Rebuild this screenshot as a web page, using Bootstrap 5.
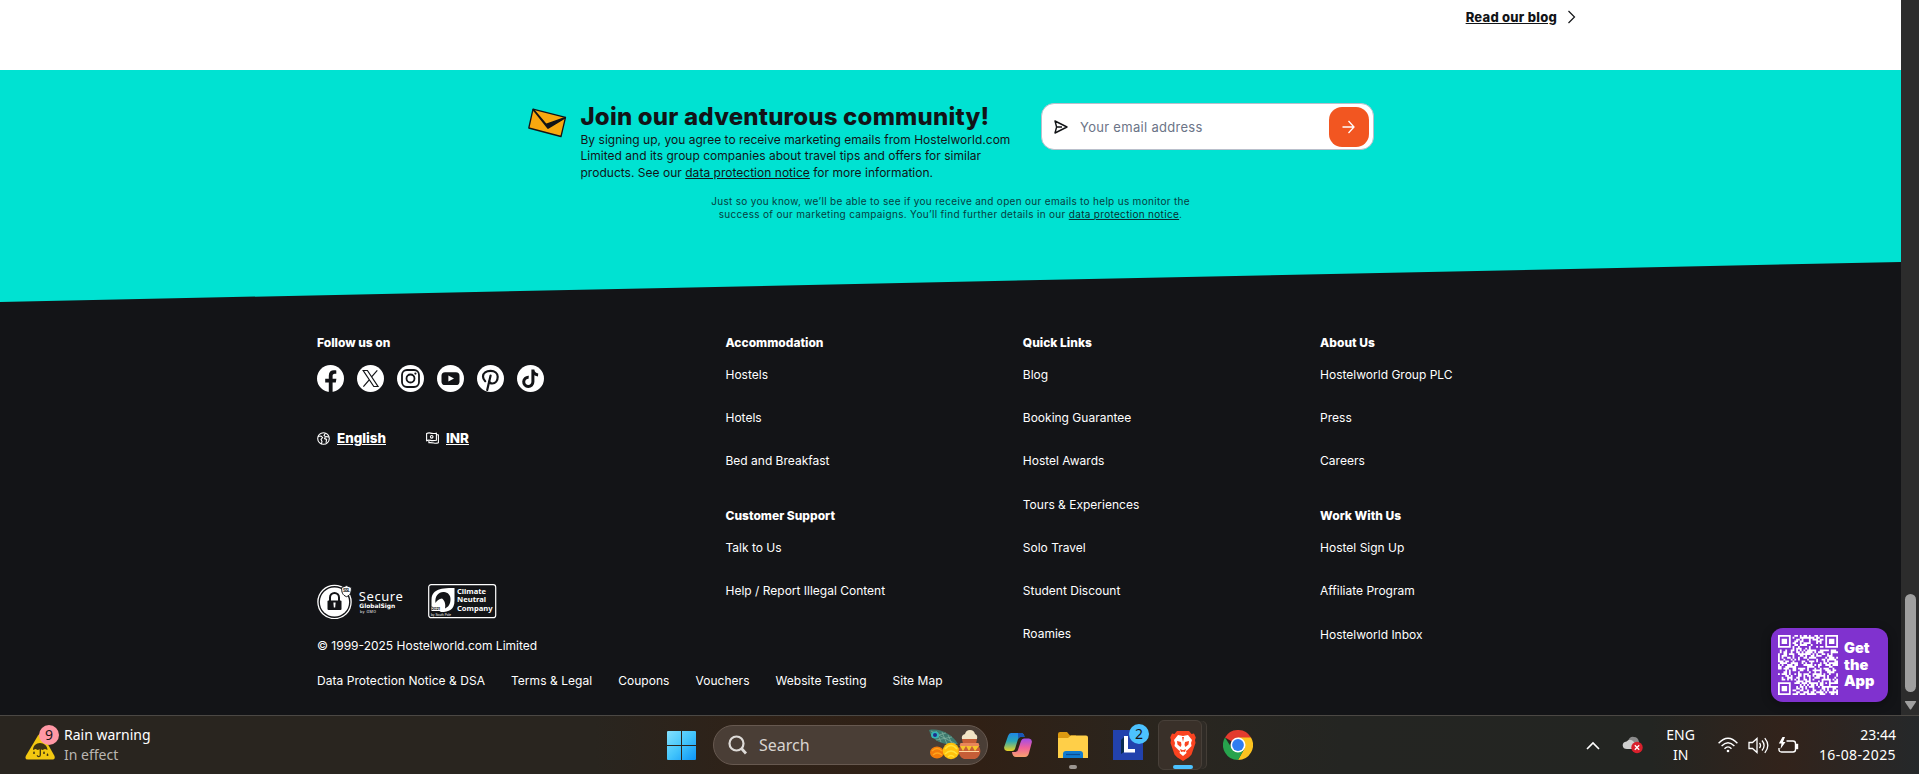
<!DOCTYPE html>
<html lang="en">
<head>
<meta charset="utf-8">
<meta name="viewport" content="width=device-width, initial-scale=1">
<title>Hostelworld</title>
<link href="https://cdn.jsdelivr.net/npm/bootstrap@5.3.0/dist/css/bootstrap.min.css" rel="stylesheet">
<style>
  body { height: 774px; overflow: hidden; font-family: Inter, sans-serif; color: #121417; background: #131417; }
  svg { display: block; flex: none; }
  .screen { height: 715px; }
  .blog-strip { height: 70px; padding: 6px 324px 0 0; }
  .blog-link { font-size: 13px; font-weight: 800; line-height: 22px; letter-spacing: .25px; color: #121417; }
  .community { height: 232px; background: #00e2d2; }
  .community-body { height: 192px; width: 848px; padding-top: 33px; }
  .mail-icon { margin: 5px 0 0 1px; }
  .join-block { width: 460px; margin-left: 13px; }
  .join-title { font-size: 24px; font-weight: 800; line-height: 28px; letter-spacing: .2px; padding-bottom: 1px; }
  .join-copy { font-size: 12px; line-height: 16.4px; letter-spacing: .02px; }
  .join-note { font-size: 10px; line-height: 13px; letter-spacing: .31px; color: #07403f; margin-top: 14px; }
  .join-note a { color: #083033; }
  .email-box { width: 333px; height: 47px; border: 1px solid #b9bfcb; border-radius: 13px; padding: 0 4px 0 12px; }
  .email-box input { font-size: 13px; letter-spacing: .3px; padding: 2px 0 0; margin-left: 12.5px; }
  .email-box input::placeholder { color: #6b7487; opacity: 1; }
  .go-btn { width: 40px; height: 40px; border-radius: 13px; background: #f25621; }
  .site-footer { width: 1267px; padding-top: 31px; color: #fff; }
  .footer-top { height: 323px; }
  .brand-col { width: 408.5px; flex: none; }
  .link-col { width: 297.3px; flex: none; }
  .foot-head { font-size: 12px; font-weight: 800; line-height: 20px; margin: 0 0 12px; }
  .link-col li { height: 43.2px; font-size: 12px; line-height: 20px; }
  .link-col ul { margin: 0 0 11.6px; }
  .foot-text { font-size: 12px; line-height: 20px; }
  .socials { gap: 13px; }
  .prefs { gap: 40px; margin-top: 36px; }
  .pref { font-size: 13.4px; font-weight: 800; line-height: 20px; gap: 7px; }
  .seals { margin-top: auto; gap: 21px; }
  .copyright { margin-top: 17px; }
  .legal { gap: 26px; margin-top: 15px; letter-spacing: .04px; }
  .scroll-track { width: 18px; background: #2c2c2c; padding-bottom: 4px; }
  .scroll-thumb { width: 11px; height: 98px; border-radius: 6px; background: #9f9f9f; margin-bottom: 8px; }
  .app-badge { position: absolute; left: 1771px; top: 628px; width: 117px; height: 74px; border-radius: 12px; background: #8032cf; padding-left: 7px; gap: 6px; box-shadow: 0 2px 10px rgba(0,0,0,.35); }
  .app-text { font-size: 14.6px; font-weight: 900; line-height: 16.7px; color: #fff; }
  .taskbar { height: 59px; display: grid; grid-template-columns: 667px 1fr auto; border-top: 1px solid #4b4844; color: #fff; font-family: "Noto Sans", sans-serif; font-size: 14px; line-height: 20px;
    background: linear-gradient(90deg, #29251f 0, #29251f 31%, #2f2218 39%, #302015 51%, #292620 62%, #242522 70%, #232522 86%, #32231b 93%, #25282a 100%); }
  .weather { padding-left: 25px; gap: 8px; }
  .sub { color: #b9b6b2; }
  .count-dot { position: absolute; width: 20px; height: 20px; border-radius: 50%; text-align: center; line-height: 20px; color: #1a1517; }
  .dot-pink { left: 14px; top: -2px; background: #ff98a5; }
  .dot-blue { left: 16px; top: -6px; background: #4cc2ff; }
  .search-pill { width: 275px; height: 40px; border: 1px solid #675950; border-radius: 20px; background: #4a3e36; margin-left: 17px; padding: 0 6px 0 14px; font-size: 16px; color: #d8d4d0; }
  .search-pill span { margin-left: 12px; }
  .brave-tile { width: 44px; height: 50px; border: 1px solid #484039; border-radius: 6px; background: #393029; margin-left: 15px; padding-left: 6px; box-shadow: 5px 0 0 -1px #2f2b26, 6px 0 0 -1px #433d36; }
  .run-mark { position: absolute; left: 50%; transform: translateX(-50%); height: 4px; border-radius: 2px; }
  .mark-idle { width: 8px; top: 33px; background: #9c9690; }
  .mark-active { width: 20px; top: 44px; margin-left: 3px; background: #4cc2ff; }
  .tray { padding-right: 23px; white-space: nowrap; }
  .tray-date { letter-spacing: .4px; }
</style>
<script src="https://cdn.jsdelivr.net/npm/bootstrap@5.3.0/dist/js/bootstrap.bundle.min.js"></script>
</head>
<body>
<div class="screen d-flex">
  <div class="flex-grow-1">
    <div class="blog-strip bg-white d-flex justify-content-end align-items-start">
      <a class="blog-link" href="#">Read our blog</a>
      <svg class="ms-2 mt-1" width="12" height="14" viewBox="0 0 12 14" fill="none" stroke="#121417" stroke-width="1.2"><path d="M3.500 1 9.500 7l-6 6"/></svg>
    </div>
    <section class="community">
      <div class="community-body mx-auto">
        <div class="d-flex align-items-start">
          <svg class="mail-icon" width="40" height="30" viewBox="0 0 40 30"><path d="M5 1.2 37.5 9.4 33 28.5.8 20Z" fill="#f8a80f" stroke="#121417" stroke-width="1.3" stroke-linejoin="round"/><path d="M5.5 1.8 18 16.500 37 9.8 20 20Z" fill="#121417" stroke="#121417" stroke-width="1.8" stroke-linejoin="round"/></svg>
          <div class="join-block">
            <h2 class="join-title m-0">Join our adventurous community!</h2>
            <div class="join-copy text-nowrap">By signing up, you agree to receive marketing emails from Hostelworld.com<br>Limited and its group companies about travel tips and offers for similar<br>products. See our <a class="text-reset" href="#">data protection notice</a> for more information.</div>
          </div>
          <div class="email-box bg-white d-flex align-items-center">
            <svg width="14" height="14" viewBox="0 0 14 14" fill="none" stroke="#121417" stroke-width="1.4" stroke-linejoin="round"><path d="M1 1 13 7 1 13 2.6 7ZM2.6 7H8"/></svg>
            <input class="form-control border-0 shadow-none" placeholder="Your email address">
            <button class="go-btn btn border-0 p-0 d-flex align-items-center justify-content-center flex-shrink-0" aria-label="Subscribe"><svg width="13" height="14" viewBox="0 0 13 14" fill="none" stroke="#fff" stroke-width="1.3"><path d="M.5 7h11.5M6.5 1 12 7l-5.500 6"/></svg></button>
          </div>
        </div>
        <p class="join-note text-center mb-0">Just so you know, we’ll be able to see if you receive and open our emails to help us monitor the<br>success of our marketing campaigns. You’ll find further details in our <a href="#">data protection notice</a>.</p>
      </div>
      <svg width="100%" height="40" viewBox="0 0 100 40" preserveAspectRatio="none"><path d="M0 40 100 0V40Z" fill="#131417"/></svg>
    </section>
    <footer class="site-footer mx-auto">
      <div class="footer-top d-flex">
        <div class="brand-col d-flex flex-column">
          <h6 class="foot-head">Follow us on</h6>
          <div class="socials d-flex">
            <svg width="27" height="27" viewBox="0 0 27 27"><circle cx="13.5" cy="13.5" r="13.5" fill="#fff"/><path d="M11.8 27V17.4H8.2V13.8h3.6v-3.1c0-3.6 2-5.4 5.2-5.4 1.2 0 2.3.2 2.3.2v3.2h-1.5c-1.7 0-2.2 1-2.2 2.1v3h3.8l-.6 3.6h-3.2V27Z" fill="#131417"/></svg>
            <svg width="27" height="27" viewBox="0 0 27 27"><circle cx="13.5" cy="13.5" r="13.5" fill="#fff"/><g fill="none" stroke="#131417" stroke-width="1.2"><path d="M6.2 5.5h4.2L21 21.5h-4.2ZM20.3 5.3 14.6 11.8M12.2 14.8 6.4 21.6"/></g></svg>
            <svg width="27" height="27" viewBox="0 0 27 27"><circle cx="13.5" cy="13.5" r="13.5" fill="#fff"/><g fill="none" stroke="#131417" stroke-width="1.8"><rect x="5" y="5" width="17" height="17" rx="5"/><circle cx="13.5" cy="13.5" r="4"/></g><circle cx="18.4" cy="8.6" r="1.1" fill="#131417"/></svg>
            <svg width="27" height="27" viewBox="0 0 27 27"><circle cx="13.5" cy="13.5" r="13.5" fill="#fff"/><rect x="4.500" y="7.2" width="18" height="12.8" rx="3.6" fill="#131417"/><path d="m11.4 10.6 5.600 3-5.600 3Z" fill="#fff"/></svg>
            <svg width="27" height="27" viewBox="0 0 27 27"><circle cx="13.5" cy="13.5" r="13.5" fill="#fff"/><g fill="none" stroke="#131417" stroke-width="2.2" stroke-linecap="round"><path d="M8.2 16.2C6.9 15 6 13.6 6 11.6 6 8 9.3 5.9 13.6 5.9c4.2 0 7.1 2.4 7.1 5.900 0 3.8-2.3 6.7-5.4 6.7-1.8 0-2.8-.9-3.1-1.9"/><path d="M13.6 10.6 10.2 25"/></g></svg>
            <svg width="27" height="27" viewBox="0 0 27 27"><circle cx="13.5" cy="13.5" r="13.5" fill="#fff"/><path d="M15.9 4.5V16.8a4.6 4.6 0 1 1-4.2-4.5M15.900 5c.4 3 2.3 4.6 5.2 4.9" fill="none" stroke="#131417" stroke-width="3"/></svg>
          </div>
          <div class="prefs d-flex">
            <div class="pref d-flex align-items-center"><svg width="13" height="13" viewBox="0 0 13 13" fill="none" stroke="#fff" stroke-width="1.1"><circle cx="6.5" cy="6.5" r="5.8"/><path d="M1 4.500 4 4l1.600 1.600L4 7.400l1 2-.6 2.600M8.500 1.200 7 3.400l1.400 1.200L7.600 6.600l2 .8L9 10.800M9 4.600l3 .4"/></svg><a class="text-reset" href="#">English</a></div>
            <div class="pref d-flex align-items-center"><svg width="13" height="12" viewBox="0 0 13 12" fill="none" stroke="#fff" stroke-width="1.1"><path d="M.6 1.500q2-1 4-.4t5.800.1v7q-3.500.8-5.800.2t-4 .3ZM10.400 2.500l2 .4v7.800q-2 .8-4.500.3t-5-.3V9"/><circle cx="5.700" cy="4.800" r="1.300"/></svg><a class="text-reset" href="#">INR</a></div>
          </div>
          <div class="seals d-flex align-items-center">
            <svg width="90" height="36" viewBox="0 0 90 36" fill="#fff"><circle cx="17.500" cy="19" r="16.600" fill="none" stroke="#fff" stroke-width="1.300"/><circle cx="17.500" cy="19" r="14.600"/><rect x="10.500" y="17.500" width="14" height="9.500" rx="1" fill="#131417"/><path d="M13 18v-3.500a4.500 4.500 0 0 1 9 0V18" fill="none" stroke="#131417" stroke-width="2"/><path d="M16.400 19.500h2.200l-.4 5h-1.400Z"/><path d="M24.600 4.500 29.500 2.600l4.900 1.900c0 4.800-.8 7.600-4.900 9.200-4.100-1.600-4.900-4.400-4.900-9.200Z" stroke="#131417"/><text x="26" y="9.200" font-size="4.500" font-weight="700" textLength="7" fill="#131417">SSL</text><text x="41.800" y="18" font-size="13" textLength="44" font-family="Noto Sans">Secure</text><text x="42.300" y="25.400" font-size="6" font-weight="700" textLength="36" lengthAdjust="spacingAndGlyphs" font-family="DejaVu Sans">GlobalSign</text><text x="43" y="30.400" font-size="3.600" textLength="16">by GMO</text></svg>
            <svg width="69" height="35" viewBox="0 0 69 35" fill="#fff"><rect x=".7" y=".7" width="67" height="33" rx="2.500" fill="none" stroke="#fff" stroke-width="1.200"/><path d="M3.500 16C3.500 8 8 3.500 26.500 4v12.500C26.500 26 21 28 13 28L3.500 22Z"/><path d="M7.500 19c-1-7 3.500-11.500 8.500-11 4 .4 6.500 3 6.500 7 0 5-2 8-5.500 9.500 1-4.500-.5-8-3-10-3 .5-5 2-6.500 4.500Z" fill="#131417"/><rect x="3.500" y="22.500" width="9" height="4.500"/><text x="3.600" y="26.400" font-size="4" font-weight="700" textLength="8.500" fill="#131417">2021</text><text x="3" y="31.500" font-size="3" textLength="20">by South Pole</text><g font-size="7.400" font-weight="700" font-family="Noto Sans"><text x="29" y="9.600" textLength="29" lengthAdjust="spacingAndGlyphs">Climate</text><text x="29" y="18.300" textLength="29" lengthAdjust="spacingAndGlyphs">Neutral</text><text x="29" y="27" textLength="35.500" lengthAdjust="spacingAndGlyphs">Company</text></g></svg>
          </div>
          <div class="copyright foot-text">© 1999-2025 Hostelworld.com Limited</div>
        </div>
        <div class="link-col">
          <h6 class="foot-head">Accommodation</h6>
          <ul class="list-unstyled"><li>Hostels</li><li>Hotels</li><li>Bed and Breakfast</li></ul>
          <h6 class="foot-head">Customer Support</h6>
          <ul class="list-unstyled"><li>Talk to Us</li><li>Help / Report Illegal Content</li></ul>
        </div>
        <div class="link-col">
          <h6 class="foot-head">Quick Links</h6>
          <ul class="list-unstyled"><li>Blog</li><li>Booking Guarantee</li><li>Hostel Awards</li><li>Tours &amp; Experiences</li><li>Solo Travel</li><li>Student Discount</li><li>Roamies</li></ul>
        </div>
        <div class="link-col">
          <h6 class="foot-head">About Us</h6>
          <ul class="list-unstyled"><li>Hostelworld Group PLC</li><li>Press</li><li>Careers</li></ul>
          <h6 class="foot-head">Work With Us</h6>
          <ul class="list-unstyled"><li>Hostel Sign Up</li><li>Affiliate Program</li><li>Hostelworld Inbox</li></ul>
        </div>
      </div>
      <div class="legal foot-text d-flex"><span>Data Protection Notice &amp; DSA</span><span>Terms &amp; Legal</span><span>Coupons</span><span>Vouchers</span><span>Website Testing</span><span>Site Map</span></div>
    </footer>
  </div>
  <div class="scroll-track d-flex flex-column justify-content-end align-items-center">
    <div class="scroll-thumb"></div>
    <svg width="13" height="11" viewBox="0 0 13 11"><path d="M1.500 1h10q1 0 .5 1L7.300 9q-.8 1-1.600 0L1 2q-.5-1 .5-1Z" fill="#9f9f9f"/></svg>
  </div>
</div>
<div class="app-badge d-flex align-items-center">
  <svg id="qr" width="60" height="60" viewBox="0 0 33 33"></svg>
  <div class="app-text">Get<br>the<br>App</div>
</div>
<div class="taskbar align-items-center">
  <div class="weather d-flex align-items-center">
    <div class="position-relative"><svg width="31" height="36" viewBox="0 0 31 36"><path d="M13 8.500q2.500-4 5 0L29.500 29q1 3.500-2.500 3.500H3Q-.5 32.500.8 29Z" fill="#f2c811"/><path d="M8 23c0-4 3-7 7-7s7.500 3 7.500 7l-2.500-1-2.500 1-2.300-1-2.400 1L10.500 22Z" fill="#3c3313"/><path d="M15.300 22v6c0 2-3 2-3 .2" fill="none" stroke="#3c3313" stroke-width="1.300"/><path d="m9 24-1 2a1 1 0 1 0 2 0ZM19 24l-1 2a1 1 0 1 0 2 0ZM22.500 26l-1 2a1 1 0 1 0 2 0Z" fill="#3c3313"/></svg><span class="count-dot dot-pink">9</span></div>
    <div>Rain warning<br><span class="sub">In effect</span></div>
  </div>
  <div class="d-flex align-items-center">
    <svg width="29" height="29" viewBox="0 0 29 29"><defs><linearGradient id="win" gradientUnits="userSpaceOnUse" x2="29" y2="29"><stop stop-color="#84e0fd"/><stop offset=".5" stop-color="#44c5fb"/><stop offset="1" stop-color="#0c94f7"/></linearGradient></defs><path d="M0 1Q0 0 1 0h13v14H0ZM15 0h13q1 0 1 1v13H15ZM0 15h14v14H1q-1 0-1-1ZM15 15h14v13q0 1-1 1H15Z" fill="url(#win)"/></svg>
    <div class="search-pill d-flex align-items-center">
      <svg width="19" height="20" viewBox="0 0 19 20" fill="none" stroke="#dedbd8" stroke-width="2.200"><circle cx="8.500" cy="8.500" r="7"/><path d="m13.500 13.500 4.500 5" stroke-width="2.800"/></svg>
      <span>Search</span>
      <svg class="ms-auto" width="53" height="32" viewBox="0 0 53 32"><path d="M1 1C12-1 24 5 30 15 20 17 4 14 1 1Z" fill="#3f7b70"/><path d="M3 2 28 15M8 2l5 11M14 3l5 12M20 6l4 9M4 8l14-4M8 11l16-3" stroke="#84b3a0" stroke-width=".7"/><ellipse cx="7" cy="6" rx="4" ry="3.500" fill="#34b7b8"/><circle cx="7" cy="6" r="2" fill="#1d2f90"/><ellipse cx="9" cy="23.500" rx="7" ry="6" fill="#f47c0a"/><path d="M4 22q5-5 10 0M5 26q4-4 9 0" fill="none" stroke="#ffa51c" stroke-width="1.300"/><circle cx="23" cy="22" r="8.300" fill="#ffc20c"/><path d="M17 20q6-7 12 0M17 25q6-6 12 0M20 28q3-3 6 0" fill="none" stroke="#ffe13b" stroke-width="1.500"/><path d="M34 10h15l-1 5c6 3 6 12-1 15H36c-7-3-7-12-1-15Z" fill="#c65e37"/><path d="M32.500 14h18l1 3H31.500Z" fill="#e9875a"/><path d="m32 17 3 5 3-5 3 5 3-5 3 5 4-5Z" fill="#f6c52c"/><path d="M31 22.500h20" stroke="#ffd7a3"/><path d="M34 10q-1-4 3-5 1-4 5-4t5 4q3 1 2 5Z" fill="#f2e4c5"/></svg>
    </div>
    <svg style="margin-left:16px" width="28" height="26" viewBox="0 0 28 26"><defs><linearGradient id="c1" x2="0" y2="1"><stop stop-color="#1e87e8"/><stop offset=".45" stop-color="#2aa7b6"/><stop offset="1" stop-color="#e8d222"/></linearGradient><linearGradient id="c2" x2="0" y2="1"><stop stop-color="#a14dea"/><stop offset=".5" stop-color="#f0619b"/><stop offset="1" stop-color="#f8a36d"/></linearGradient></defs><path d="M7 1h10q3 0 3.500 4h-4q-2 0-2.600 2.500L11 17q-.8 2-3 2H3Q-1 18 .5 14L4 4Q5 1 7 1Z" fill="url(#c1)"/><path d="M21 25H12q-3.500 0-4-5h3.500q2 0 2.600-2.500L17 9q.8-2.500 3-2.500h5q4 1 2.500 5L25 21q-1 4-4 4Z" fill="url(#c2)"/><path d="M14 1h3q3 0 3.500 4h-4q-1.600 0-2.300 2Z" fill="#1956b8"/></svg>
    <div class="position-relative" style="margin-left:26px"><svg width="30" height="27" viewBox="0 0 30 27"><path d="M0 2Q0 0 2 0h7l3 3.500h6V10H0Z" fill="#dc9a11"/><path d="M0 6h10l3-2.500h15q2 0 2 2V26H0Z" fill="#ffcf48"/><path d="M5 26v-4q0-3 3-3h14q3 0 3 3v4Z" fill="#0f7bd0"/><path d="M8 22.500h14" stroke="#0a4c93" stroke-width="1.200"/></svg><span class="run-mark mark-idle"></span></div>
    <div class="position-relative" style="margin-left:25px"><svg width="30" height="30" viewBox="0 0 30 30"><path d="M0 0h30v30H0Z" fill="#2242ad"/><path d="m11 22-3 2V10l3-3Z" fill="#0a2d50"/><path d="M11 6h4v13h7v3.500H11Z" fill="#fff"/></svg><span class="count-dot dot-blue">2</span></div>
    <div class="brave-tile position-relative d-flex align-items-center justify-content-center"><svg width="26" height="31" viewBox="0 0 26 31"><path d="M7 1h12l2.500 3 2.500-.5 1.800 4L25 10l.5 3-4 11.500Q20 27 13 31 6 27 4.500 24.500L.5 13 1 10 .2 7.500 2 3.500l2.500.5Z" fill="#fa4320"/><path d="m8 5 5 1 5-1 4 5-1 3 .5 3-4 4-1.500 1 .5 2-3.500 3-3.500-3 .5-2L8.500 20l-4-4 .5-3-1-3Z" fill="#fff"/><path d="m7 11 4 1 .5 3-1 2-3-2.500ZM19 11l-4 1-.5 3 1 2 3-2.500ZM10 19l3 1.300 3-1.300-1 3-2-.6-2 .6ZM12 7h2l-1 5Z" fill="#fa4320"/></svg><span class="run-mark mark-active"></span></div>
    <svg style="margin-left:21px" width="30" height="30" viewBox="-15 -15 30 30"><path d="M0 0-13-7.500A15 15 0 0 1 13-7.500Z" fill="#e33b2e"/><path d="M0-7.500H13A15 15 0 0 1 0 15L6.500 3.500Z" fill="#fcc31f"/><path d="M-13-7.500A15 15 0 0 0 0 15L6.500 3.500-6 3.500Z" fill="#27a34d"/><circle r="7.500" fill="#fff"/><circle r="5.900" fill="#2f7cf0"/></svg>
  </div>
  <div class="tray d-flex align-items-center">
    <svg width="14" height="9" viewBox="0 0 14 9" fill="none" stroke="#fff" stroke-width="1.600"><path d="m1 8 6-6 6 6"/></svg>
    <svg style="margin-left:22px" width="21" height="18" viewBox="0 0 21 18"><path d="M6 5Q8 0 12 1q4 0 5 5v6H6Z" fill="#8b8b8b"/><path d="M5 13Q1 13 .7 9.500.6 6 4.500 5.500 8 2 12 6l4 6v1Z" fill="#cfcfcf"/><circle cx="15" cy="11.500" r="5.700" fill="#d9202c"/><path d="m12.800 9.300 4.400 4.400m0-4.400-4.400 4.400" stroke="#fff" stroke-width="1.300"/></svg>
    <div class="text-center" style="margin-left:23px">ENG<br>IN</div>
    <svg style="margin-left:23px" width="20" height="16" viewBox="0 0 20 16" fill="none" stroke="#fff" stroke-width="1.400"><path d="M.6 6.200Q10-3.800 19.400 6.200M3.600 9q6.400-6.600 12.800 0M6.500 11.700q3.500-3.600 7 0"/><circle cx="10" cy="14" r="1.300" fill="#fff" stroke="none"/></svg>
    <svg style="margin-left:10px" width="21" height="17" viewBox="0 0 21 17" fill="none" stroke="#fff" stroke-width="1.300"><path d="M1 5.500h3.500L9 1.500v14l-4.500-4H1ZM11.500 6q2 2.500 0 5M14 3.500q4.200 5 0 10M16.800 1.200q6 7.300 0 14.600"/></svg>
    <svg style="margin-left:9px" width="21" height="17" viewBox="0 0 21 17" fill="none" stroke="#fff" stroke-width="1.400"><path d="M8.500 4H15q2.500 0 2.500 2.500v6Q17.500 15 15 15H3.500Q1 15 1 12.500V11"/><path d="M18.500 7.500h1v4h-1Z"/><path d="M4.500 0 .8 6.500h2.700L2.500 12l5-7H5L7 0Z" fill="#fff" stroke="none"/></svg>
    <div class="text-end" style="margin-left:20px">23:44<br><span class="tray-date">16-08-2025</span></div>
  </div>
</div>
<script>
  // Module grid of the app's QR code: finder squares, one alignment square, and filled data modules.
  const n = 33, cells = [];
  let seed = 20250;
  const rand = () => (seed = (seed * 48271) % 2147483647) / 2147483647;
  const ring = (x, y, cx, cy) => Math.max(Math.abs(x - cx), Math.abs(y - cy));
  for (let y = 0; y < n; y++) for (let x = 0; x < n; x++) {
    let on = rand() < .53;
    for (const [cx, cy] of [[3, 3], [29, 3], [3, 29]]) { const d = ring(x, y, cx, cy); if (d <= 4) on = d === 3 || d <= 1; }
    const a = ring(x, y, 26, 26); if (a <= 2) on = a !== 1;
    if (on) cells.push(`M${x} ${y}h1v1h-1z`);
  }
  document.getElementById('qr').innerHTML = `<path fill="#fff" d="${cells.join('')}"/>`;
</script>
</body>
</html>
